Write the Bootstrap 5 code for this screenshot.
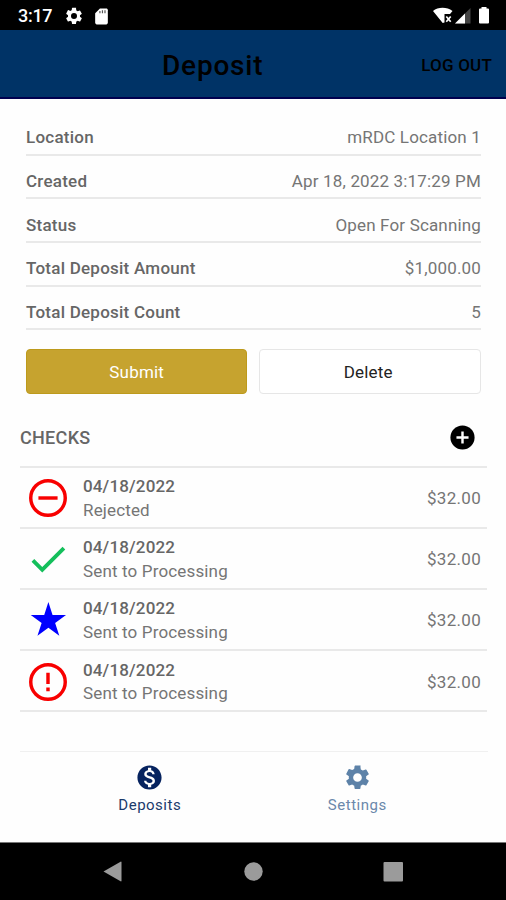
<!DOCTYPE html>
<html lang="en">
<head>
<meta charset="utf-8">
<meta name="viewport" content="width=device-width, initial-scale=1">
<title>Deposit</title>
<link href="https://cdn.jsdelivr.net/npm/bootstrap@5.3.0/dist/css/bootstrap.min.css" rel="stylesheet">
<style>
  body { font-family: Roboto, "Liberation Sans", sans-serif; font-size: 17px; line-height: 22px; color: #757575; }
  svg { display: block; flex: none; }
  .screen { width: 506px; height: 900px; background: #fefefe; overflow: hidden; }
  .status-bar { height: 30px; background: #000; color: #fff; padding: 2px 15px 0 18px; }
  .clock { font-size: 18px; font-weight: 500; letter-spacing: -.3px; width: 46px; }
  .app-bar { height: 69px; background: #003366; border-bottom: 2px solid #00004e; color: #000; display: grid; grid-template-columns: 162px auto 1fr; padding: 4px 14px 0 0; }
  .app-title { font-size: 28px; font-weight: 500; line-height: 34px; letter-spacing: .8px; }
  .log-out { color: #000; font-size: 17px; font-weight: 500; letter-spacing: .2px; line-height: 22px; margin-top: -2px; }
  .details { padding: 13px 25px 0 26px; }
  .detail-row { height: 43.7px; border-bottom: 2px solid #e9e9e9; padding-top: 9px; }
  .label { font-weight: 500; letter-spacing: .24px; color: #666; }
  .value { letter-spacing: .16px; }
  .actions { padding: 19px 25px 0 26px; gap: 12px; }
  .actions .btn { height: 45px; font-size: 17px; letter-spacing: .2px; border-radius: 4px; padding: 1px 0 0; }
  .actions .btn-delete { padding-right: 4px; }
  .btn-submit, .btn-submit:hover { background: #c6a32f; color: #fff; border: 1px solid #bd9a1c; }
  .btn-delete, .btn-delete:hover { background: #fff; color: #222; border: 1.5px solid #e6e6e6; }
  .checks { padding: 0 19px 0 20px; }
  .checks-head { height: 73.5px; border-bottom: 2px solid #e9e9e9; padding: 14px 10px 0 0; }
  .checks-head .label { font-size: 18px; letter-spacing: .3px; padding-top: 2px; }
  .check-row { height: 61.3px; border-bottom: 2px solid #e9e9e9; padding: 2px 6px 0 5px; }
  .check-row:nth-child(2) { height: 60.6px; }
  .check-row .value { letter-spacing: .15px; }
  .check-row > .value { letter-spacing: .3px; }
  .check-text { line-height: 23.6px; padding: 1px 0 0 12px; }
  .check-text .label { letter-spacing: .15px; }
  .tabs { margin: auto 18px 0 20px; height: 91px; border-top: 1px solid #f0f0f0; padding: 11px 27px 0 26px; }
  .tab { color: #1b3a6b; font-size: 15px; line-height: 20px; letter-spacing: .5px; }
  .tab-off { color: #6b88ab; }
  .tab span { margin-top: 3px; }
  .nav-keys { height: 58.5px; background: #000; border-top: 1px solid #777; }
</style>
<script src="https://cdn.jsdelivr.net/npm/bootstrap@5.3.0/dist/js/bootstrap.bundle.min.js"></script>
</head>
<body>
<svg width="0" height="0" class="position-absolute" aria-hidden="true">
  <symbol id="gear" viewBox="0 0 24 24"><path d="M19.14 12.94c.04-.3.06-.61.06-.94s-.02-.64-.07-.94l2.03-1.58a.49.49 0 0 0 .12-.61l-1.92-3.32a.49.49 0 0 0-.59-.22l-2.39.96a7 7 0 0 0-1.62-.94l-.36-2.54A.48.48 0 0 0 13.92 2h-3.84a.48.48 0 0 0-.48.41l-.36 2.54c-.59.24-1.13.57-1.62.94l-2.39-.96a.48.48 0 0 0-.59.22L2.72 8.87a.48.48 0 0 0 .12.61l2.03 1.58c-.05.3-.07.63-.07.94s.02.64.07.94l-2.03 1.58a.49.49 0 0 0-.12.61l1.92 3.32c.12.22.37.29.59.22l2.39-.96c.5.38 1.03.7 1.62.94l.36 2.54c.05.24.24.41.48.41h3.84c.24 0 .44-.17.47-.41l.36-2.54a6.7 6.7 0 0 0 1.62-.94l2.39.96c.22.08.47 0 .59-.22l1.92-3.32a.48.48 0 0 0-.12-.61zM12 15.6a3.6 3.6 0 1 1 0-7.2 3.6 3.6 0 0 1 0 7.2z"/></symbol>
</svg>
<div class="screen d-flex flex-column">
  <div class="status-bar d-flex align-items-center">
    <span class="clock">3:17</span>
    <svg width="20" height="20" fill="#fff"><use href="#gear"/></svg>
    <svg class="ms-2" width="19" height="19" viewBox="0 0 24 24" fill="#fff"><path d="M18 2h-8L4 8v12c0 1.100.9 2 2 2h12c1.100 0 2-.9 2-2V4c0-1.100-.9-2-2-2z"/><path d="M10 5v3M13.200 4v4M16.400 4v4" stroke="#555" stroke-width="1.500"/></svg>
    <svg class="ms-auto" width="58" height="20" viewBox="0 0 58 20">
      <path d="M0 5C5 .7 14 .7 19.500 5L17 8h-5.500v8.500L9.700 17z" fill="#fff"/>
      <path d="M13.300 10.500l4.400 5.200M17.700 10.500l-4.400 5.200" stroke="#fff" stroke-width="1.700"/>
      <path d="M37.500 2v15.500H22z" fill="#444"/>
      <path d="M32 7.500v10H22z" fill="#fff"/>
      <path d="M48.500 2.500V1h5v1.500H55a1 1 0 0 1 1 1V16.500a1 1 0 0 1-1 1H47a1 1 0 0 1-1-1V3.500a1 1 0 0 1 1-1z" fill="#fff"/>
    </svg>
  </div>
  <header class="app-bar align-items-center">
    <span></span>
    <h1 class="app-title m-0">Deposit</h1>
    <a href="#" class="log-out text-decoration-none text-end">LOG OUT</a>
  </header>
  <section class="details">
    <div class="detail-row d-flex justify-content-between align-items-center"><span class="label">Location</span><span class="value">mRDC Location 1</span></div>
    <div class="detail-row d-flex justify-content-between align-items-center"><span class="label">Created</span><span class="value">Apr 18, 2022 3:17:29 PM</span></div>
    <div class="detail-row d-flex justify-content-between align-items-center"><span class="label">Status</span><span class="value">Open For Scanning</span></div>
    <div class="detail-row d-flex justify-content-between align-items-center"><span class="label">Total Deposit Amount</span><span class="value">$1,000.00</span></div>
    <div class="detail-row d-flex justify-content-between align-items-center"><span class="label">Total Deposit Count</span><span class="value">5</span></div>
  </section>
  <div class="actions d-flex">
    <button class="btn btn-submit flex-fill w-50">Submit</button>
    <button class="btn btn-delete flex-fill w-50">Delete</button>
  </div>
  <section class="checks">
    <div class="checks-head d-flex justify-content-between align-items-center">
      <span class="label">CHECKS</span>
      <svg width="29" height="29" viewBox="0 0 24 24"><circle cx="12" cy="12" r="10"/><path d="M12 7v10M7 12h10" stroke="#fff" stroke-width="2"/></svg>
    </div>
    <div class="check-row d-flex align-items-center">
      <svg width="46" height="46" viewBox="0 0 24 24" fill="none" stroke="#f80000" stroke-width="1.800"><circle cx="12" cy="12" r="9"/><path d="M7 12h10"/></svg>
      <div class="check-text d-flex flex-column flex-grow-1"><span class="label">04/18/2022</span><span class="value">Rejected</span></div>
      <span class="value">$32.00</span>
    </div>
    <div class="check-row d-flex align-items-center">
      <svg width="46" height="46" viewBox="0 0 24 24" fill="#14bf5b"><path d="M9 16.170 4.830 12l-1.420 1.410L9 19 21 7l-1.410-1.410z"/></svg>
      <div class="check-text d-flex flex-column flex-grow-1"><span class="label">04/18/2022</span><span class="value">Sent to Processing</span></div>
      <span class="value">$32.00</span>
    </div>
    <div class="check-row d-flex align-items-center">
      <svg width="46" height="46" viewBox="0 0 24 24" fill="#00f"><path d="M12 16.700l5.700 4.140-2.180-6.700L21.200 10h-7.030L12 3.200 9.830 10H2.800l5.680 4.140-2.180 6.700z" transform="translate(.2 -.6)"/></svg>
      <div class="check-text d-flex flex-column flex-grow-1"><span class="label">04/18/2022</span><span class="value">Sent to Processing</span></div>
      <span class="value">$32.00</span>
    </div>
    <div class="check-row d-flex align-items-center">
      <svg width="46" height="46" viewBox="0 0 24 24" fill="none" stroke="#f80000" stroke-width="1.800"><circle cx="12" cy="12" r="9"/><path d="M12 7.200v5.800M12 14.900v1.900"/></svg>
      <div class="check-text d-flex flex-column flex-grow-1"><span class="label">04/18/2022</span><span class="value">Sent to Processing</span></div>
      <span class="value">$32.00</span>
    </div>
  </section>
  <nav class="tabs d-flex">
    <a href="#" class="tab w-50 d-flex flex-column align-items-center text-decoration-none">
      <svg width="29" height="29" viewBox="0 0 24 24" fill="#06235f"><path d="M12 2C6.480 2 2 6.480 2 12s4.480 10 10 10 10-4.480 10-10S17.520 2 12 2zm1.410 16.090V20h-2.670v-1.930c-1.710-.36-3.160-1.460-3.270-3.400h1.960c.1 1.050.82 1.870 2.650 1.870 1.960 0 2.400-.98 2.400-1.590 0-.83-.44-1.610-2.670-2.140-2.480-.6-4.180-1.620-4.180-3.670 0-1.720 1.390-2.840 3.110-3.210V4h2.670v1.950c1.860.45 2.790 1.860 2.850 3.390H14.300c-.05-1.110-.64-1.870-2.220-1.870-1.500 0-2.400.68-2.400 1.640 0 .84.65 1.390 2.670 1.910s4.180 1.390 4.180 3.910c-.01 1.830-1.380 2.830-3.120 3.160z"/></svg>
      <span>Deposits</span>
    </a>
    <a href="#" class="tab tab-off w-50 d-flex flex-column align-items-center text-decoration-none">
      <svg width="29" height="29" fill="#5d82a8"><use href="#gear"/></svg>
      <span>Settings</span>
    </a>
  </nav>
  <div class="nav-keys flex-shrink-0 d-flex justify-content-center">
    <svg width="302" height="58" viewBox="0 0 302 58" fill="#9b9b9b"><path d="M1.500 28.500 19 18.500a1 1 0 0 1 .5.500v19a1 1 0 0 1-.5.500z"/><circle cx="151.500" cy="28.500" r="9.200"/><rect x="281.500" y="19" width="19.500" height="19.500" rx="1"/></svg>
  </div>
</div>
</body>
</html>
